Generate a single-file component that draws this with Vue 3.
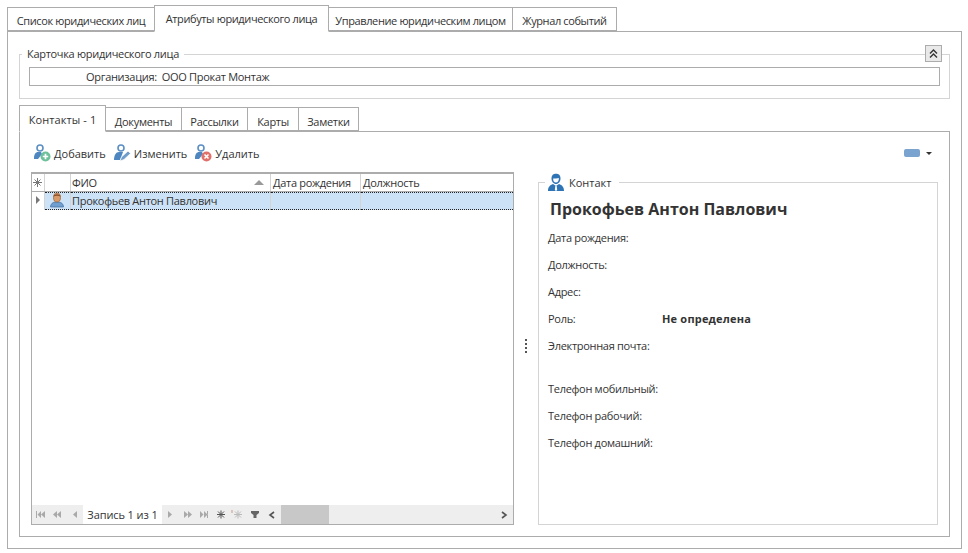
<script setup>
const topTabs = [
  { label: 'Список юридических лиц', width: 148 },
  { label: 'Атрибуты юридического лица', width: 175, active: true },
  { label: 'Управление юридическим лицом', width: 185 },
  { label: 'Журнал событий', width: 105 }
];

const innerTabs = [
  { label: 'Контакты - 1', width: 87, active: true },
  { label: 'Документы', width: 77 },
  { label: 'Рассылки', width: 67 },
  { label: 'Карты', width: 52 },
  { label: 'Заметки', width: 61 }
];

const details = [
  { label: 'Дата рождения:' },
  { label: 'Должность:' },
  { label: 'Адрес:' },
  { label: 'Роль:', value: 'Не определена' },
  { label: 'Электронная почта:', tall: true },
  { label: 'Телефон мобильный:' },
  { label: 'Телефон рабочий:' },
  { label: 'Телефон домашний:' }
];
</script>

<template>
  <main class="page">
    <div class="tabs top-tabs">
      <div
        v-for="tab in topTabs"
        :key="tab.label"
        class="tab"
        :class="{ active: tab.active }"
        :style="{ width: tab.width + 'px' }"
      >{{ tab.label }}</div>
    </div>

    <section class="panel">
      <div class="card">
        <span class="legend card-legend">Карточка юридического лица</span>
        <button class="collapse">
          <svg width="9" height="9" viewBox="0 0 9 9">
            <path d="M1 4.500 4.500 1 8 4.500M1 8.500 4.500 5 8 8.500" fill="none" stroke="#333" stroke-width="1.4" />
          </svg>
        </button>
        <div class="org-field">
          <span class="org-label">Организация:</span>
          <span>ООО Прокат Монтаж</span>
        </div>
      </div>

      <div class="tabs inner-tabs">
        <div
          v-for="tab in innerTabs"
          :key="tab.label"
          class="tab"
          :class="{ active: tab.active }"
          :style="{ width: tab.width + 'px' }"
        >{{ tab.label }}</div>
      </div>

      <div class="inner-panel">
        <div class="toolbar">
          <div class="tool">
            <svg width="18" height="18" viewBox="0 0 18 18">
              <circle cx="7" cy="4" r="3" fill="none" stroke="#5b8fc4" stroke-width="1.6" />
              <path d="M1 14c0-4 2-6 4-6h3l1 2-4 5H1z" fill="#4d86c0" />
              <circle cx="12.500" cy="12.500" r="5" fill="#6cc09a" />
              <path d="M12.500 9.800v5.400M9.800 12.500h5.400" stroke="#fff" stroke-width="1.700" />
            </svg>
            <span>Добавить</span>
          </div>
          <div class="tool">
            <svg width="18" height="18" viewBox="0 0 18 18">
              <circle cx="8" cy="4" r="3" fill="none" stroke="#5b8fc4" stroke-width="1.6" />
              <path d="M1 16c0-5 2-8 5-8h4l-3 8H1z" fill="#4d86c0" />
              <path d="M7 17l1.500-4 6.500-6 2.500 2.500-6.500 6z" fill="#6f9ccb" stroke="#fff" stroke-width=".7" />
            </svg>
            <span>Изменить</span>
          </div>
          <div class="tool">
            <svg width="18" height="18" viewBox="0 0 18 18">
              <circle cx="7" cy="4" r="3" fill="none" stroke="#5b8fc4" stroke-width="1.6" />
              <path d="M1 14c0-4 2-6 4-6h3l1 2-4 5H1z" fill="#4d86c0" />
              <circle cx="12.500" cy="12.500" r="5" fill="#e0706a" />
              <path d="M10.500 10.500l4 4M14.500 10.500l-4 4" stroke="#fff" stroke-width="1.600" />
            </svg>
            <span>Удалить</span>
          </div>
          <div class="view-switch">
            <i class="view-chip"></i>
            <i class="caret"></i>
          </div>
        </div>

        <div class="content">
          <div class="grid">
            <div class="grid-row grid-head">
              <div class="cell col-ind">
                <svg width="9" height="9" viewBox="0 0 9 9">
                  <path d="M4.500 0v9M0 4.500h9M1.500 1.500l6 6M7.500 1.500l-6 6" stroke="#777" stroke-width="1" />
                </svg>
              </div>
              <div class="cell col-icon"></div>
              <div class="cell col-name">
                <span>ФИО</span>
                <i class="sort"></i>
              </div>
              <div class="cell col-date">Дата рождения</div>
              <div class="cell col-pos">Должность</div>
            </div>
            <div class="grid-row grid-selected">
              <div class="cell col-ind">
                <i class="row-arrow"></i>
              </div>
              <div class="cell col-icon sel">
                <svg width="16" height="16" viewBox="0 0 16 16">
                  <path d="M1.500 15c0-3 2-4.500 4.500-5h4c2.500.5 4.500 2 4.500 5z" fill="#6f9fd0" stroke="#44719f" stroke-width=".7" />
                  <ellipse cx="8" cy="5.500" rx="3.500" ry="4.500" fill="#d89a68" stroke="#9a6034" stroke-width=".7" />
                  <path d="M4.500 4.500C4.500 1.500 11.500 1.500 11.500 4.500 9.500 3.500 6.500 3.500 4.500 4.500z" fill="#8a5228" />
                </svg>
              </div>
              <div class="cell col-name sel">Прокофьев Антон Павлович</div>
              <div class="cell col-date sel"></div>
              <div class="cell col-pos sel"></div>
            </div>
            <div class="grid-body"></div>
            <div class="navigator">
              <div class="nav-buttons nav-left">
                <svg width="51" height="19" viewBox="0 0 51 19">
                  <g fill="#a9a9a9">
                    <path d="M4 6h1v7H4zM9 6v7L5.500 9.500zM13 6v7L9 9.500z" />
                    <path d="M25 6v7l-4-3.500zM29 6v7l-4-3.500z" />
                    <path d="M45 6v7l-4-3.500z" />
                  </g>
                </svg>
              </div>
              <div class="nav-text">Запись 1 из 1</div>
              <div class="nav-buttons nav-right">
                <svg width="101" height="19" viewBox="0 0 101 19">
                  <g fill="#a9a9a9">
                    <path d="M6 6v7l4-3.500z" />
                    <path d="M22 6v7l4-3.500zM26 6v7l4-3.500z" />
                    <path d="M38 6v7l3.500-3.500zM42 6v7l3.500-3.500zM45 6h1v7h-1z" />
                  </g>
                  <path d="M59 5.500v8M55 9.500h8M56 6.500l6 6M62 6.500l-6 6" stroke="#555" stroke-width="1" />
                  <path d="M76 5.500v8M72 9.500h8M73 6.500l6 6M79 6.500l-6 6" stroke="#bbb" stroke-width="1" />
                  <path d="M70 5v3" stroke="#c98" stroke-width="1" />
                  <path d="M89 6h8v2l-2.500 2v3h-3v-3L89 8z" fill="#666" />
                </svg>
              </div>
              <div class="scrollbar">
                <div class="scroll-btn">
                  <svg width="8" height="8" viewBox="0 0 8 8">
                    <path d="M6 1 2 4l4 3" fill="none" stroke="#555" stroke-width="1.600" />
                  </svg>
                </div>
                <div class="scroll-thumb"></div>
                <div class="scroll-track"></div>
                <div class="scroll-btn">
                  <svg width="8" height="8" viewBox="0 0 8 8">
                    <path d="M2 1l4 3-4 3" fill="none" stroke="#555" stroke-width="1.600" />
                  </svg>
                </div>
              </div>
            </div>
          </div>

          <div class="splitter">
            <i></i><i></i><i></i><i></i>
          </div>

          <div class="contact">
            <div class="legend contact-legend">
              <svg width="18" height="19" viewBox="0 0 18 19">
                <path d="M1 18c0-4 2-6 5-7l3 2 3-2c3 1 5 3 5 7z" fill="#2f74b5" />
                <path d="M8.300 13h1.400l.5 4-1.200 1-1.200-1z" fill="#fff" />
                <path d="M4.500 5.500C4.500 2 6.500.8 9 .8s4.500 1.200 4.500 4.700c0 3-2 5.500-4.500 5.500S4.500 8.500 4.500 5.500z" fill="#2f74b5" />
                <path d="M6.200 5.500c1.500 0 4 0 5.600-.5.300 2.500-1 4.500-2.800 4.500S5.900 8 6.200 5.500z" fill="#fff" />
              </svg>
              <span>Контакт</span>
            </div>
            <h2 class="person">Прокофьев Антон Павлович</h2>
            <div
              v-for="item in details"
              :key="item.label"
              class="detail"
              :class="{ tall: item.tall }"
            >
              <span class="detail-label">{{ item.label }}</span>
              <strong v-if="item.value" class="detail-value">{{ item.value }}</strong>
            </div>
          </div>
        </div>
      </div>
    </section>
  </main>
</template>

<style>
html,
body {
  margin: 0;
  background: #fff;
}
</style>

<style scoped>
.page {
  width: 955px;
  padding: 5px 0 0 7px;
  font-family: "Open Sans", "Noto Sans", sans-serif;
  font-size: 11px;
  letter-spacing: -0.3px;
  color: #333;
}

.tabs {
  display: flex;
  align-items: flex-end;
}

.top-tabs {
  height: 26px;
  letter-spacing: -0.38px;
}

.tab {
  box-sizing: border-box;
  height: 24px;
  margin-right: -1px;
  border: 1px solid #acacac;
  background: #fff;
  text-align: center;
  line-height: 25px;
  white-space: nowrap;
}

.tab.active {
  position: relative;
  z-index: 1;
  height: 27px;
  margin-bottom: -1px;
  border-bottom-color: #fff;
  padding-bottom: 3px;
}

.panel {
  box-sizing: border-box;
  height: 518px;
  padding: 22px 11px 11px;
  border: 1px solid #acacac;
}

.card {
  position: relative;
  box-sizing: border-box;
  height: 45px;
  padding: 12px 9px 0;
  border: 1px solid #d4d4d4;
}

.legend {
  position: absolute;
  background: #fff;
}

.card-legend {
  top: -9px;
  left: 2px;
  padding: 0 5px;
  line-height: 15px;
}

.collapse {
  position: absolute;
  top: -10px;
  right: 7px;
  width: 17px;
  height: 17px;
  padding: 0;
  border: 1px solid #acacac;
  background: #e9e9e9;
  display: flex;
  align-items: center;
  justify-content: center;
}

.org-field {
  box-sizing: border-box;
  display: flex;
  height: 19px;
  padding-left: 56px;
  gap: 5px;
  border: 1px solid #acacac;
  line-height: 17px;
}

.inner-tabs {
  height: 26px;
  margin-top: 6px;
}

.inner-tabs .tab {
  line-height: 27px;
}

.inner-tabs .tab.active {
  letter-spacing: 0.1px;
}

.inner-panel {
  box-sizing: border-box;
  height: 406px;
  padding: 0 11px 11px;
  border: 1px solid #acacac;
}

.toolbar {
  display: flex;
  align-items: center;
  height: 40px;
  padding: 6px 0 4px 2px;
  box-sizing: border-box;
  gap: 7px;
  letter-spacing: 0;
}

.tool {
  display: flex;
  align-items: center;
  gap: 3px;
}

.view-switch {
  display: flex;
  align-items: center;
  gap: 6px;
  margin-left: auto;
  margin-right: 6px;
}

.view-chip {
  width: 16px;
  height: 8px;
  border-radius: 2px;
  background: #7aa3cf;
}

.caret {
  width: 0;
  height: 0;
  border-left: 3px solid transparent;
  border-right: 3px solid transparent;
  border-top: 3px solid #333;
}

.content {
  display: flex;
  height: 353px;
}

.grid {
  box-sizing: border-box;
  display: flex;
  flex-direction: column;
  width: 483px;
  border: 1px solid #acacac;
  border-top-width: 2px;
}

.grid-row {
  display: flex;
}

.grid-head {
  height: 17px;
  border-bottom: 1px solid #acacac;
}

.grid-selected {
  height: 18px;
}

.grid-selected .cell {
  padding-bottom: 2px;
}

.cell {
  box-sizing: border-box;
  display: flex;
  align-items: center;
  padding-left: 2px;
  border-right: 1px solid #d4d4d4;
  white-space: nowrap;
}

.col-ind {
  width: 13px;
  padding-left: 1px;
}

.col-icon {
  width: 26px;
  justify-content: center;
  padding-left: 0;
}

.col-icon svg {
  margin-left: -2px;
}

.col-name {
  width: 200px;
  padding-left: 1px;
  justify-content: space-between;
}

.col-date {
  width: 90px;
}

.col-pos {
  flex: 1;
  border-right: 0;
}

.sel {
  background: #cce2f6;
  border-top: 1px dotted #222;
  border-bottom: 1px dotted #222;
}

.sort {
  width: 0;
  height: 0;
  margin-right: 6px;
  border-left: 5px solid transparent;
  border-right: 5px solid transparent;
  border-bottom: 5px solid #999;
}

.row-arrow {
  width: 0;
  height: 0;
  margin-left: 3px;
  border-top: 4px solid transparent;
  border-bottom: 4px solid transparent;
  border-left: 4px solid #777;
}

.grid-body {
  flex: 1;
}

.navigator {
  display: flex;
  height: 19px;
  background: #eee;
}

.nav-buttons {
  height: 19px;
}

.nav-left {
  width: 51px;
}

.nav-text {
  width: 79px;
  background: #fff;
  text-align: center;
  line-height: 19px;
  letter-spacing: -0.1px;
}

.nav-right {
  width: 101px;
  overflow: hidden;
}

.scrollbar {
  flex: 1;
  display: flex;
}

.scroll-btn {
  width: 18px;
  display: flex;
  align-items: center;
  justify-content: center;
}

.scroll-thumb {
  width: 48px;
  background: #c8c8c8;
}

.scroll-track {
  flex: 1;
}

.splitter {
  box-sizing: border-box;
  width: 24px;
  padding-bottom: 5px;
  display: flex;
  flex-direction: column;
  align-items: center;
  justify-content: center;
  gap: 2px;
}

.splitter i {
  width: 2px;
  height: 2px;
  background: #555;
}

.contact {
  position: relative;
  box-sizing: border-box;
  width: 400px;
  margin-top: 10px;
  padding: 10px 9px 0;
  border: 1px solid #d4d4d4;
}

.contact-legend {
  top: -10px;
  left: 6px;
  display: flex;
  align-items: center;
  gap: 4px;
  padding: 0 8px 0 2px;
  letter-spacing: 0;
}

.person {
  margin: 0 0 0 2px;
  height: 31px;
  line-height: 32px;
  font-size: 16px;
  font-weight: 700;
  letter-spacing: 0;
}

.detail {
  display: flex;
  height: 27px;
  line-height: 27px;
  letter-spacing: -0.3px;
  white-space: nowrap;
}

.detail.tall {
  height: 43px;
}

.detail-label {
  width: 114px;
}

.detail-value {
  font-weight: 700;
  letter-spacing: 0.2px;
}
</style>
